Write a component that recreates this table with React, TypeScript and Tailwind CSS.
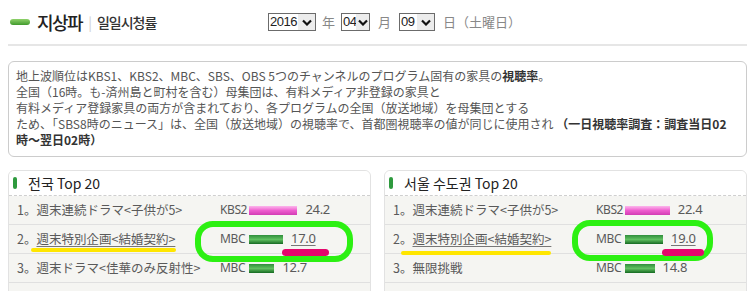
type Row = { n: number; title: string; ch: string; v: number; hot?: boolean };

const nation: Row[] = [
  { n: 1, title: "週末連続ドラマ<子供が5>", ch: "KBS2", v: 24.2 },
  { n: 2, title: "週末特別企画<結婚契約>", ch: "MBC", v: 17.0, hot: true },
  { n: 3, title: "週末ドラマ<佳華のみ反射性>", ch: "MBC", v: 12.7 },
];

const seoul: Row[] = [
  { n: 1, title: "週末連続ドラマ<子供が5>", ch: "KBS2", v: 22.4 },
  { n: 2, title: "週末特別企画<結婚契約>", ch: "MBC", v: 19.0, hot: true },
  { n: 3, title: "無限挑戦", ch: "MBC", v: 14.8 },
];

function Chevron() {
  return (
    <svg width="10" height="7" viewBox="0 0 10 7">
      <path d="M1 1.5 L5 5.5 L9 1.5" fill="none" stroke="#111" strokeWidth="2.2" />
    </svg>
  );
}

function DateSelect({ value, width }: { value: string; width: string }) {
  return (
    <div className={`flex h-[18px] ${width} border border-[#6b6b6b] bg-white`}>
      <span className="flex-1 pl-[1px] text-[13px] leading-[16px] tracking-[-0.5px] text-[#222]">{value}</span>
      <span className="flex w-[17px] items-center justify-center bg-[#ececec]">
        <Chevron />
      </span>
    </div>
  );
}

function Panel({ title, rows }: { title: string; rows: Row[] }) {
  return (
    <div className="overflow-hidden rounded-t-[6px] border border-[#e2e2e2] bg-[#f5f5f2]">
      {/* panel header */}
      <div className="flex h-[25px] items-center border-b border-dashed border-[#cfcfcf] bg-white pl-[4px]">
        <span className="h-[12px] w-[4px] rounded-full bg-[#2e9a3e]" />
        <span className="ml-[11px] font-['Noto_Sans_CJK_KR',sans-serif] text-[14px] text-[#222]">{title}</span>
      </div>
      {rows.map((r) => (
        <div key={r.n} className="flex h-[29px] items-center border-b border-[#e0e0e0] pl-[8px] text-[12.5px] text-[#5a5a5a]">
          <div className="w-[203px] whitespace-nowrap">
            {r.n}。<span className={r.hot ? "underline decoration-[#777] underline-offset-2" : ""}>{r.title}</span>
          </div>
          <span className="w-[29px] font-['Noto_Sans',sans-serif] text-[12px] tracking-[-0.4px]">{r.ch}</span>
          <span
            className={
              r.ch === "KBS2"
                ? "h-[9px] bg-gradient-to-b from-[#fbb6ec] via-[#ee5ccf] to-[#d23bb4]"
                : "h-[9px] bg-gradient-to-b from-[#2f8f3c] via-[#5fc060] to-[#136a22]"
            }
            style={{ width: `${r.v * 2}px` }}
          />
          <span
            className={`ml-[8px] font-['Noto_Sans',sans-serif] text-[13px] tracking-[-0.3px] ${r.hot ? "underline decoration-[#777] underline-offset-2" : ""}`}
          >
            {r.v.toFixed(1)}
          </span>
        </div>
      ))}
      <div className="h-[29px]" />
    </div>
  );
}

export default function App() {
  return (
    <div className="relative h-[291px] w-[755px] overflow-hidden bg-white px-2 font-['Noto_Sans_CJK_JP',sans-serif]">
      {/* title + date */}
      <div className="flex h-[46px] items-center border-b-2 border-[#e6e6e6]">
        <div className="flex w-[260px] items-center pl-[2px]">
          <span className="h-[6px] w-[20px] rounded-full bg-gradient-to-b from-[#8fd26a] to-[#3f9a2c]" />
          <span className="ml-[7px] font-['Noto_Sans_CJK_KR',sans-serif] text-[18px] font-medium tracking-[-1.5px] text-[#222]">지상파</span>
          <span className="ml-[6px] text-[14px] text-[#cfcfcf]">|</span>
          <span className="ml-[5px] font-['Noto_Sans_CJK_KR',sans-serif] text-[14px] font-medium tracking-[-1px] text-[#333]">일일시청률</span>
        </div>
        <div className="flex items-center font-['Liberation_Sans',sans-serif] text-[13px] text-[#888]">
          <DateSelect value="2016" width="w-[48px]" />
          <span className="mx-[6px] font-['Noto_Sans_CJK_JP',sans-serif]">年</span>
          <DateSelect value="04" width="w-[29px]" />
          <span className="mx-[8px] font-['Noto_Sans_CJK_JP',sans-serif]">月</span>
          <DateSelect value="09" width="w-[36px]" />
          <span className="ml-[8px] font-['Noto_Sans_CJK_JP',sans-serif]">日（土曜日）</span>
        </div>
      </div>

      {/* info box */}
      <div className="mt-[15px] h-[96px] rounded-[6px] border border-[#cccccc] pl-[7px] pt-[6px] text-[12px] leading-[16px] whitespace-nowrap text-[#555]">
        地上波順位はKBS1、KBS2、MBC、SBS、OBS 5つのチャンネルのプログラム固有の家具の<b className="text-[#333]">視聴率</b>。
        <br />
        全国（16時。も-済州島と町村を含む）母集団は、有料メディア非登録の家具と
        <br />
        有料メディア登録家具の両方が含まれており、各プログラムの全国（放送地域）を母集団とする
        <br />
        ため、「SBS8時のニュース」は、全国（放送地域）の視聴率で、首都圏視聴率の値が同じに使用され{" "}
        <b className="text-[#333]">（一日視聴率調査：調査当日02</b>
        <br />
        <b className="text-[#333]">時～翌日02時）</b>
      </div>

      {/* top 20 panels */}
      <div className="mt-[13px] grid grid-cols-2 gap-[13px]">
        <Panel title="전국 Top 20" rows={nation} />
        <Panel title="서울 수도권 Top 20" rows={seoul} />
      </div>

      {/* hand-drawn annotations */}
      <div className="absolute left-[195px] top-[221px] h-[41px] w-[158px] rounded-[18px] border-[6px] border-[#2cf012]" />
      <div className="absolute left-[572px] top-[220px] h-[41px] w-[141px] rounded-[18px] border-[6px] border-[#2cf012]" />
      <div className="absolute left-[282px] top-[249px] h-[7px] w-[47px] rounded-full bg-[#e4066c]" />
      <div className="absolute left-[662px] top-[249px] h-[7px] w-[42px] rounded-full bg-[#e4066c]" />
      <div className="absolute left-[31px] top-[248px] h-[4px] w-[145px] rounded-full bg-[#ffe600]" />
      <div className="absolute left-[401px] top-[251px] h-[4px] w-[150px] rounded-full bg-[#ffe600]" />
    </div>
  );
}
